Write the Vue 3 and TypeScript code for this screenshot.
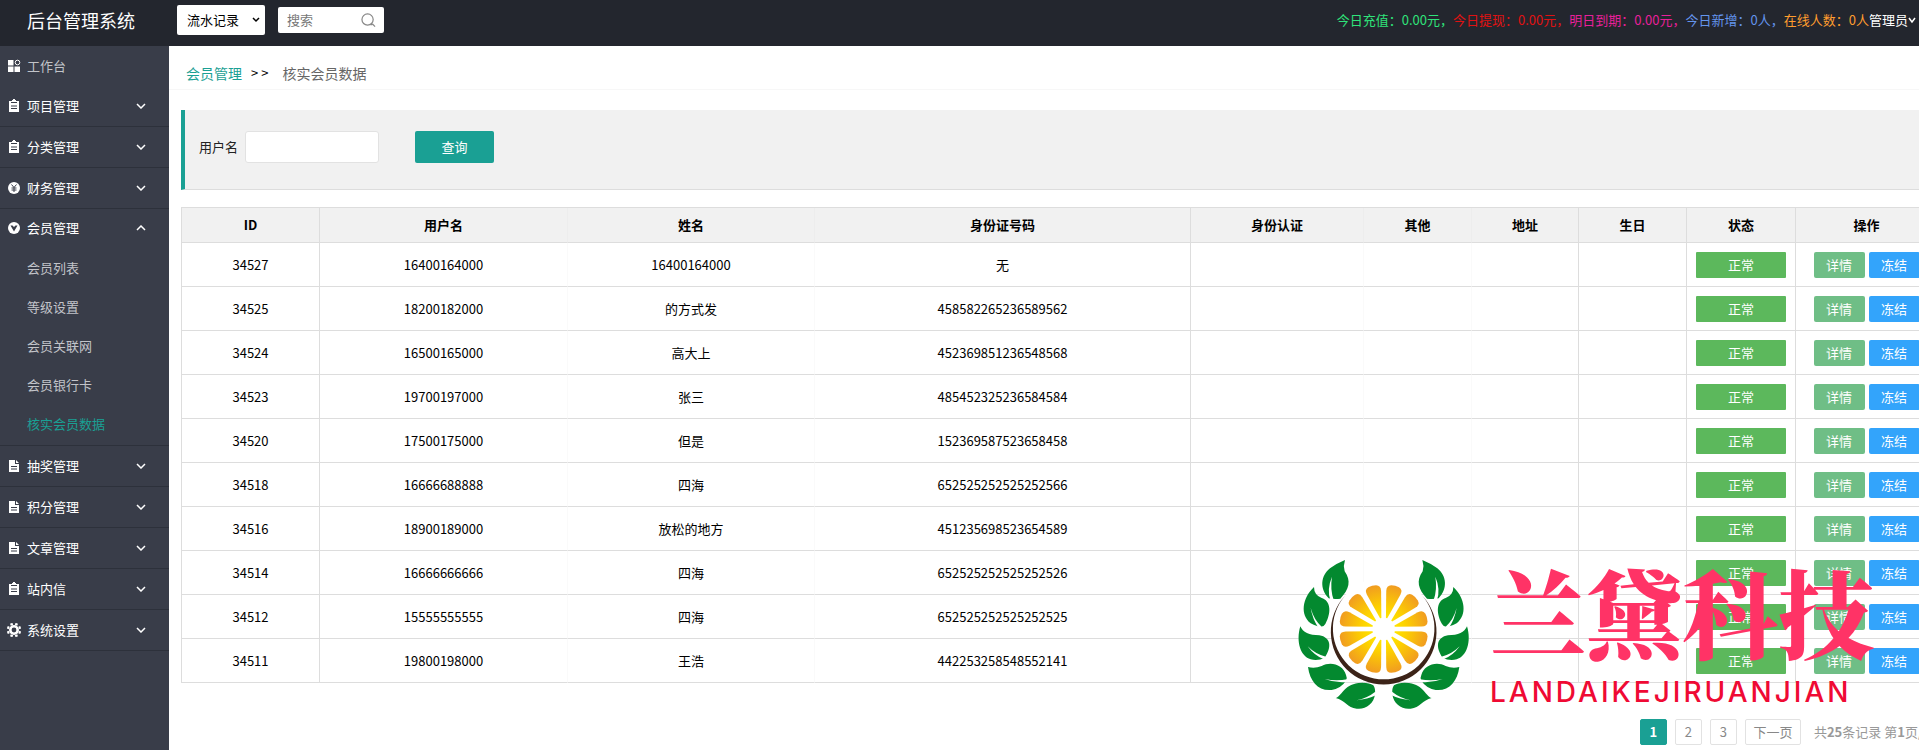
<script setup lang="ts">
import { ref } from 'vue'

type IconKind = 'grid' | 'clipboard' | 'yen' | 'member' | 'doc' | 'gear'

interface MenuItem {
  label: string
  icon: IconKind
  plain?: boolean
  children?: string[]
}

interface Member {
  id: string
  user: string
  name: string
  card: string
}

const menu: MenuItem[] = [
  { label: '工作台', icon: 'grid', plain: true },
  { label: '项目管理', icon: 'clipboard' },
  { label: '分类管理', icon: 'clipboard' },
  { label: '财务管理', icon: 'yen' },
  {
    label: '会员管理',
    icon: 'member',
    children: ['会员列表', '等级设置', '会员关联网', '会员银行卡', '核实会员数据'],
  },
  { label: '抽奖管理', icon: 'doc' },
  { label: '积分管理', icon: 'doc' },
  { label: '文章管理', icon: 'doc' },
  { label: '站内信', icon: 'clipboard' },
  { label: '系统设置', icon: 'gear' },
]

const opened = ref('会员管理')
const current = ref('核实会员数据')
const username = ref('')
const keyword = ref('')

const stats = [
  { text: '今日充值：0.00元，', tone: 'green' },
  { text: '今日提现：0.00元，', tone: 'red' },
  { text: '明日到期：0.00元，', tone: 'pink' },
  { text: '今日新增：0人，', tone: 'blue' },
  { text: '在线人数：0人', tone: 'orange' },
]

const columns = ['ID', '用户名', '姓名', '身份证号码', '身份认证', '其他', '地址', '生日', '状态', '操作']

const members: Member[] = [
  { id: '34527', user: '16400164000', name: '16400164000', card: '无' },
  { id: '34525', user: '18200182000', name: '的方式发', card: '458582265236589562' },
  { id: '34524', user: '16500165000', name: '高大上', card: '452369851236548568' },
  { id: '34523', user: '19700197000', name: '张三', card: '485452325236584584' },
  { id: '34520', user: '17500175000', name: '但是', card: '152369587523658458' },
  { id: '34518', user: '16666688888', name: '四海', card: '652525252525252566' },
  { id: '34516', user: '18900189000', name: '放松的地方', card: '451235698523654589' },
  { id: '34514', user: '16666666666', name: '四海', card: '652525252525252526' },
  { id: '34512', user: '15555555555', name: '四海', card: '652525252525252525' },
  { id: '34511', user: '19800198000', name: '王浩', card: '442253258548552141' },
]

const slices = Array.from({ length: 12 }, (_, i) => 15 + i * 30)

function toggle(item: MenuItem) {
  opened.value = opened.value === item.label ? '' : item.label
}
</script>

<template>
  <div class="shell">
    <header class="topbar">
      <h1 class="brand">后台管理系统</h1>
      <div class="picker">
        <select aria-label="记录类型">
          <option>流水记录</option>
        </select>
        <svg class="picker-arrow" viewBox="0 0 8 6" aria-hidden="true"><path d="M1 1l3 3 3-3" /></svg>
      </div>
      <div class="search">
        <input v-model="keyword" type="text" placeholder="搜索" aria-label="搜索" />
        <button type="button" aria-label="搜索">
          <svg viewBox="0 0 16 16" aria-hidden="true">
            <circle cx="7" cy="7" r="6" />
            <path d="M10 12.500h2M12 11.500l3 3" />
          </svg>
        </button>
      </div>
      <div class="stats">
        <span v-for="s in stats" :key="s.text" :class="s.tone">{{ s.text }}</span>
      </div>
      <button class="account" type="button">
        管理员<svg viewBox="0 0 8 8" aria-hidden="true"><path d="M1 2l3 4 3-4" /></svg>
      </button>
    </header>

    <nav class="side">
      <template v-for="item in menu" :key="item.label">
        <button class="menu" :class="{ plain: item.plain }" type="button" @click="toggle(item)">
          <svg class="icon" viewBox="0 0 14 14" aria-hidden="true">
            <template v-if="item.icon === 'grid'">
              <path d="M1 1h5.500v5.500H1zM1 7.500h5.500V13H1zM7.500 7.500H13V13H7.500z" />
              <circle class="line" cx="10.500" cy="3.500" r="2.300" />
            </template>
            <template v-else-if="item.icon === 'clipboard'">
              <path d="M2 2h3V1h1V0h2v1h1v1h3v11H2z" />
              <path class="cut" d="M4 3.500h6M4 7h6M4 9.500h6" />
            </template>
            <template v-else-if="item.icon === 'yen'">
              <circle cx="7" cy="7" r="6" />
              <path class="cut" d="M4.500 3.500L7 6.500l2.500-3M4.500 7h5M4.500 9h5M7 6.500V11" />
            </template>
            <template v-else-if="item.icon === 'member'">
              <circle cx="7" cy="7" r="6" />
              <path class="hole" d="M3.500 4.500h2L7 6l1.500-1.500h2L7 10.500z" />
            </template>
            <template v-else-if="item.icon === 'doc'">
              <path d="M2 1h6v4h4v8H2zM9 1l3 3H9z" />
              <path class="cut" d="M4 7.500h6M4 10h6" />
            </template>
            <template v-else>
              <circle class="ring" cx="7" cy="7" r="3.700" />
              <path
                class="teeth"
                d="M9 2.200l.8-1.900M11.800 5l1.900-.8M11.800 9l1.900.8M9 11.800l.8 1.900M5 11.800l-.8 1.900M2.200 9l-1.900.8M2.200 5L.3 4.200M5 2.200L4.200.3"
              />
            </template>
          </svg>
          <span>{{ item.label }}</span>
          <svg
            v-if="!item.plain"
            class="arrow"
            :class="{ up: opened === item.label }"
            viewBox="0 0 10 6"
            aria-hidden="true"
          >
            <path d="M1 1l4 4 4-4" />
          </svg>
        </button>
        <ul v-if="item.children && opened === item.label" class="sub">
          <li v-for="child in item.children" :key="child">
            <a href="#" :class="{ on: current === child }" @click.prevent="current = child">{{ child }}</a>
          </li>
        </ul>
      </template>
    </nav>

    <main class="main">
      <div class="crumbs">
        <a href="#">会员管理</a>
        <span class="sep">&gt;&gt;</span>
        <span class="here">核实会员数据</span>
      </div>

      <form class="filter" @submit.prevent>
        <label for="username">用户名</label>
        <input id="username" v-model="username" type="text" />
        <button type="submit">查询</button>
      </form>

      <table class="list">
        <colgroup>
          <col v-for="n in columns.length" :key="n" :class="'c' + n" />
        </colgroup>
        <thead>
          <tr>
            <th v-for="c in columns" :key="c">{{ c }}</th>
          </tr>
        </thead>
        <tbody>
          <tr v-for="m in members" :key="m.id">
            <td>{{ m.id }}</td>
            <td>{{ m.user }}</td>
            <td>{{ m.name }}</td>
            <td>{{ m.card }}</td>
            <td></td>
            <td></td>
            <td></td>
            <td></td>
            <td><button class="state" type="button">正常</button></td>
            <td>
              <div class="ops">
                <button class="detail" type="button">详情</button>
                <button class="freeze" type="button">冻结</button>
              </div>
            </td>
          </tr>
        </tbody>
      </table>

      <div class="pager">
        <a class="now" href="#">1</a>
        <a href="#">2</a>
        <a href="#">3</a>
        <a class="next" href="#">下一页</a>
        <span>共<b>25</b>条记录 第<b>1</b>页/</span>
      </div>
    </main>

    <div class="mark">
      <svg class="emblem" viewBox="0 0 570 510" aria-hidden="true">
        <defs>
          <radialGradient id="pulp" gradientUnits="userSpaceOnUse" cx="0" cy="0" r="136">
            <stop offset="0.200" stop-color="#ffe800" />
            <stop offset="0.500" stop-color="#fdd000" />
            <stop offset="1" stop-color="#f09a22" />
          </radialGradient>
          <g id="leaves">
            <path d="M165 30Q140 40 120 55C92 78 88 115 116 145Q135 149 151 146C178 118 184 92 164 64Q159 47 165 30Z" />
            <path d="M72 111C36 145 30 195 62 220Q75 228 88 230Q101 232 106 222C128 182 118 150 95 144Q72 135 72 111Z" />
            <path d="M31 229C17 275 32 320 62 328Q85 333 104 323C126 292 123 262 88 256Q42 256 31 229Z" />
            <path d="M54 351C60 395 85 424 125 420Q154 414 168 392Q172 382 168 375C160 344 122 332 95 348Q75 356 54 351Z" />
            <path d="M137 444C155 440 160 405 205 399Q235 396 250 406Q257 416 255 432C252 462 225 480 200 476C172 474 165 450 137 444Z" />
            <g class="vein">
              <path d="M126 80Q110 118 121 150H131Q120 118 126 80Z" />
              <path d="M62 174Q68 208 85 233L95 230Q72 210 62 174Z" />
              <path d="M53 289Q74 318 102 328L108 320Q78 314 53 289Z" />
              <path d="M104 387Q138 400 172 396V388Q138 394 104 387Z" />
              <path d="M200 451Q232 448 259 435L256 425Q232 444 200 451Z" />
            </g>
          </g>
        </defs>
        <circle cx="281" cy="236" r="153" fill="#fff" />
        <path d="M165 137A158.500 158.500 0 1 0 397 137A152.300 152.300 0 1 1 165 137Z" fill="#3c2318" />
        <g transform="translate(281 237)" fill="url(#pulp)">
          <path
            v-for="a in slices"
            :key="a"
            :transform="`rotate(${a})`"
            d="M34 -2L112 -22Q129 -26 133 -12Q136 0 133 12Q129 26 112 22L34 2Z"
          />
        </g>
        <g fill="#03892f">
          <use href="#leaves" />
          <use href="#leaves" transform="translate(562 0) scale(-1 1)" />
        </g>
      </svg>
      <div class="words">
        <strong>兰黛科技</strong>
        <span>LANDAIKEJIRUANJIAN</span>
      </div>
    </div>
  </div>
</template>

<style>
body {
  margin: 0;
}
</style>

<style scoped>
.shell {
  position: relative;
  display: grid;
  grid-template: 46px 1fr / 169px minmax(0, 1fr);
  min-height: 100vh;
  overflow: hidden;
  box-sizing: border-box;
  background: #fff;
  color: #000;
  font: 13px/20px 'Noto Sans CJK SC', sans-serif;
}
button,
input,
select {
  font: inherit;
  box-sizing: border-box;
  margin: 0;
  border: 0;
}
button {
  padding: 0;
  cursor: pointer;
}
a {
  text-decoration: none;
}

.topbar {
  grid-column: 1 / -1;
  display: flex;
  align-items: center;
  padding: 0 3px 6px 27px;
  background: #23262e;
  color: #fff;
  white-space: nowrap;
}
.brand {
  width: 150px;
  margin: 0;
  font-size: 18px;
  font-weight: 400;
  line-height: 26px;
}
.picker {
  display: grid;
  align-items: center;
}
.picker select {
  grid-area: 1 / 1;
  width: 88px;
  height: 30px;
  padding: 0 20px 0 10px;
  border-radius: 2px;
  background: #fff;
  color: #000;
  appearance: none;
}
.picker-arrow {
  grid-area: 1 / 1;
  justify-self: end;
  width: 8px;
  height: 6px;
  margin-right: 5px;
  fill: none;
  stroke: #000;
  stroke-width: 1.500;
  pointer-events: none;
}
.search {
  display: flex;
  align-items: center;
  width: 106px;
  height: 26px;
  margin-left: 13px;
  border-radius: 2px;
  background: #fff;
}
.search input {
  flex: 1;
  min-width: 0;
  padding: 0 0 0 9px;
  background: none;
}
.search input::placeholder {
  color: #777;
}
.search button {
  display: flex;
  margin-right: 8px;
  background: none;
}
.search svg {
  width: 15px;
  height: 15px;
  fill: none;
  stroke: #888;
  stroke-width: 1.300;
}
.stats {
  display: flex;
  margin-left: auto;
}
.green { color: #2fe37a; }
.red { color: #e01212; }
.pink { color: #e8209a; }
.blue { color: #6495ed; }
.orange { color: #ff9d2e; }
.account {
  display: flex;
  align-items: center;
  background: none;
  color: #fff;
}
.account svg {
  width: 8px;
  height: 8px;
  fill: none;
  stroke: #fff;
  stroke-width: 1.500;
}

.side {
  background: #393d49;
}
.menu {
  display: flex;
  align-items: center;
  width: 100%;
  height: 41px;
  padding: 0 23px 0 7px;
  border-bottom: 1px solid #2d313b;
  background: none;
  color: #fff;
}
.menu.plain {
  height: 40px;
  border-bottom-color: transparent;
  color: #c2c4c9;
}
.icon {
  width: 14px;
  height: 14px;
  margin-right: 6px;
  fill: #fff;
}
.icon .line {
  fill: none;
  stroke: #fff;
}
.icon .cut {
  fill: none;
  stroke: #393d49;
}
.icon .hole {
  fill: #393d49;
}
.icon .ring,
.icon .teeth {
  fill: none;
  stroke: #fff;
  stroke-width: 2.600;
}
.arrow {
  width: 10px;
  height: 6px;
  margin-left: auto;
  fill: none;
  stroke: #fff;
  stroke-width: 1.500;
}
.arrow.up {
  transform: rotate(180deg);
}
.menu:has(.up) {
  height: 39px;
  border-bottom-color: transparent;
}
.sub {
  margin: 0;
  padding: 0 0 2px;
  border-bottom: 1px solid #2d313b;
  list-style: none;
}
.sub a {
  display: block;
  padding-left: 27px;
  color: #c2c4c9;
  line-height: 39px;
}
.sub a.on {
  color: #1aa094;
}

.main {
  min-width: 0;
}
.crumbs {
  display: flex;
  align-items: center;
  height: 44px;
  padding: 10px 17px 0;
  border-bottom: 1px solid #f7f7f7;
  box-sizing: border-box;
  font-size: 14px;
}
.crumbs a {
  color: #1aa094;
}
.sep {
  margin: 0 11px 0 9px;
  font-size: 13px;
  letter-spacing: 3px;
}
.here {
  color: #666;
}
.filter {
  display: flex;
  align-items: flex-start;
  height: 80px;
  margin: 20px 0 17px 12px;
  padding: 21px 14px;
  border-bottom: 1px solid #ddd;
  border-left: 4px solid #1aa094;
  box-sizing: border-box;
  background: #f1f1f1;
}
.filter label {
  color: #222;
  line-height: 32px;
}
.filter input {
  width: 134px;
  height: 32px;
  margin: 0 36px 0 7px;
  padding: 0 8px;
  border: 1px solid #e2e2e2;
  border-radius: 3px;
  background: #fff;
}
.filter button {
  width: 79px;
  height: 32px;
  border-radius: 2px;
  background: #1aa094;
  color: #fff;
}

.list {
  width: calc(100% + 7px);
  margin-left: 12px;
  table-layout: fixed;
  border-collapse: separate;
  border-spacing: 0;
  border-top: 1px solid #ddd;
  border-left: 1px solid #ddd;
}
.c1 { width: 138px; }
.c2 { width: 248px; }
.c3 { width: 247px; }
.c4 { width: 376px; }
.c5 { width: 173px; }
.c6 { width: 108px; }
.c7 { width: 107px; }
.c8 { width: 108px; }
.c9 { width: 109px; }
.c10 { width: 142px; }
.list th,
.list td {
  padding: 0;
  border-right: 1px solid #ddd;
  border-bottom: 1px solid #ddd;
  box-sizing: border-box;
  text-align: center;
}
.list th {
  height: 35px;
  background: #f1f1f1;
  font-weight: 700;
}
.list td {
  height: 44px;
}
.list th:nth-child(2),
.list th:nth-child(3),
.list th:nth-child(5),
.list th:nth-child(6) {
  border-right-color: #ededed;
}
.list td:nth-child(2),
.list td:nth-child(3),
.list td:nth-child(5),
.list td:nth-child(6) {
  border-right-color: #fafafa;
}
.list button {
  height: 26px;
  border-radius: 2px;
  color: #fff;
  vertical-align: middle;
}
.list .state {
  width: 90px;
  border-radius: 1px;
  background: #5cb85c;
}
.ops {
  display: flex;
  justify-content: center;
  gap: 4px;
}
.ops button {
  width: 51px;
}
.detail {
  background: #6fbe86;
}
.freeze {
  background: #33a4fb;
}

.pager {
  display: flex;
  justify-content: flex-end;
  gap: 8px;
  margin: 36px -4px 0 0;
  color: #999;
  line-height: 26px;
  white-space: nowrap;
}
.pager a {
  width: 27px;
  height: 26px;
  border: 1px solid #e2e2e2;
  border-radius: 2px;
  box-sizing: border-box;
  color: #888;
  line-height: 24px;
  text-align: center;
}
.pager .now {
  border-color: #1aa094;
  background: #1aa094;
  color: #fff;
  font-weight: 700;
}
.pager .next {
  width: 56px;
}
.pager span {
  margin-left: 5px;
}

.mark {
  position: absolute;
  right: 40px;
  bottom: 30px;
  display: flex;
  align-items: flex-start;
  gap: 10px;
  pointer-events: none;
}
.emblem {
  width: 190px;
  height: 170px;
}
.vein {
  fill: #fff;
}
.words {
  display: flex;
  flex-direction: column;
  width: 389px;
  white-space: nowrap;
}
.words strong {
  color: #ff3366;
  font: 900 96px/120px 'Noto Serif CJK SC', 'Noto Sans CJK SC', serif;
}
.words span {
  color: #ef0a34;
  font-family: Inter, sans-serif;
  font-size: 28px;
  font-weight: 500;
  line-height: 44px;
  letter-spacing: 3px;
}
</style>
